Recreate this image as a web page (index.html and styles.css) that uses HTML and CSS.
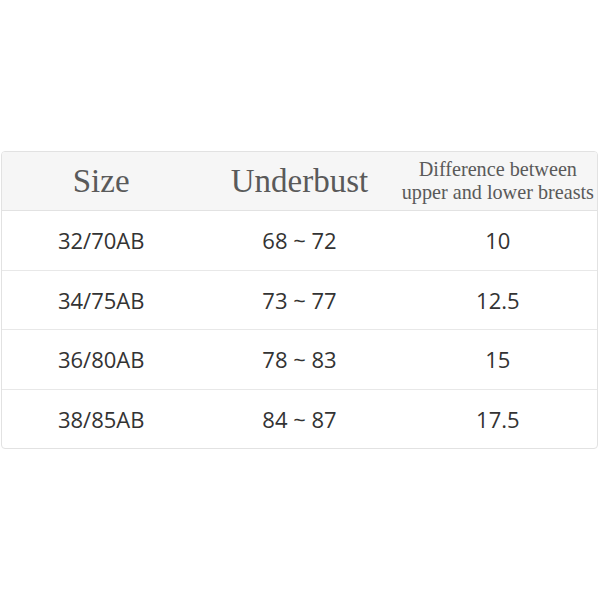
FILE: index.html
```html
<!DOCTYPE html>
<html>
<head>
<meta charset="utf-8">
<link rel="stylesheet" href="styles.css">
</head>
<body>
<div class="page">
  <table class="size-table">
    <thead>
      <tr>
        <th class="h-big">Size</th>
        <th class="h-big">Underbust</th>
        <th class="h-small">Difference between<br>upper and lower breasts</th>
      </tr>
    </thead>
    <tbody>
      <tr><td>32/70AB</td><td>68 ~ 72</td><td>10</td></tr>
      <tr><td>34/75AB</td><td>73 ~ 77</td><td>12.5</td></tr>
      <tr><td>36/80AB</td><td>78 ~ 83</td><td>15</td></tr>
      <tr><td>38/85AB</td><td>84 ~ 87</td><td>17.5</td></tr>
    </tbody>
  </table>
</div>
</body>
</html>
```
FILE: styles.css
```css
html, body {
  margin: 0;
  padding: 0;
  background: #fff;
}
.page {
  width: 600px;
  height: 600px;
  padding: 151px 2px 0 1px;
  box-sizing: border-box;
}
.size-table {
  width: 597px;
  border-collapse: separate;
  border-spacing: 0;
  border: 1px solid #e2e2e2;
  border-radius: 4px;
  table-layout: fixed;
  overflow: hidden;
}
.size-table th {
  background: #f6f6f6;
  height: 58px;
  padding: 0;
  font-family: "Liberation Serif", "Times New Roman", serif;
  font-weight: normal;
  color: #5a5a5a;
  border-bottom: 1px solid #e2e2e2;
  white-space: nowrap;
  text-align: center;
  vertical-align: middle;
}
.h-big {
  font-size: 33px;
}
.h-small {
  font-size: 20.2px;
  line-height: 23px;
  overflow: visible;
}
.size-table td {
  height: 58.5px;
  padding: 0;
  text-align: center;
  vertical-align: middle;
  font-family: "Open Sans", "Noto Sans", sans-serif;
  font-size: 22px;
  color: #333;
  border-bottom: 1px solid #e8e8e8;
}
.size-table tbody tr:last-child td {
  border-bottom: none;
}
```
